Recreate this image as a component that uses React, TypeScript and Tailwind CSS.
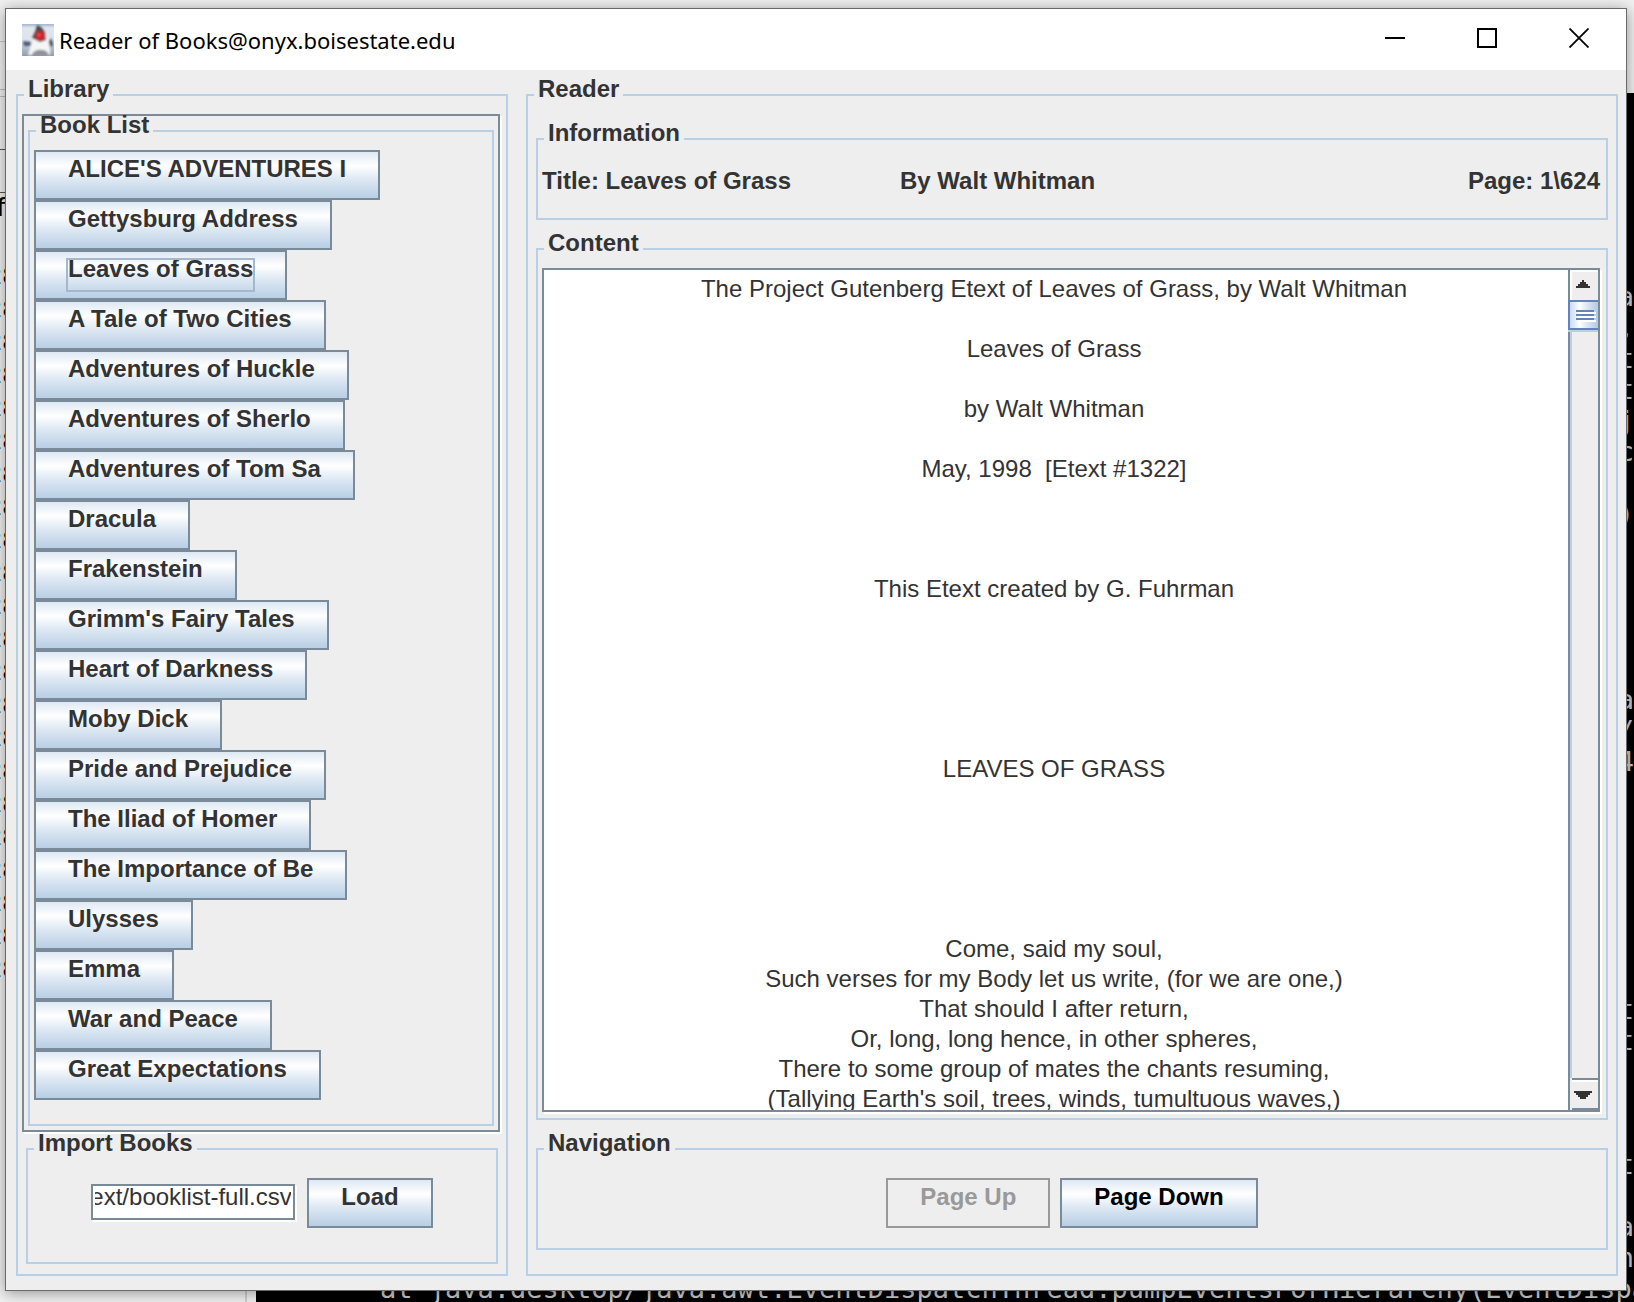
import { useEffect, useRef, type ReactNode } from "react";

const books = [
  "ALICE'S ADVENTURES I",
  "Gettysburg Address",
  "Leaves of Grass",
  "A Tale of Two Cities",
  "Adventures of Huckle",
  "Adventures of Sherlo",
  "Adventures of Tom Sa",
  "Dracula",
  "Frakenstein",
  "Grimm's Fairy Tales",
  "Heart of Darkness",
  "Moby Dick",
  "Pride and Prejudice",
  "The Iliad of Homer",
  "The Importance of Be",
  "Ulysses",
  "Emma",
  "War and Peace",
  "Great Expectations",
];

const page = `The Project Gutenberg Etext of Leaves of Grass, by Walt Whitman

Leaves of Grass

by Walt Whitman

May, 1998  [Etext #1322]



This Etext created by G. Fuhrman





LEAVES OF GRASS





Come, said my soul,
Such verses for my Body let us write, (for we are one,)
That should I after return,
Or, long, long hence, in other spheres,
There to some group of mates the chants resuming,
(Tallying Earth's soil, trees, winds, tumultuous waves,)
`;

const terminalTail: Record<number, string> = {
  0: "a", 1: ",", 2: "t", 3: "t", 4: "j", 5: "c", 7: ")", 13: "a", 14: "/", 15: "4",
  23: "t", 24: "t", 28: "t", 30: "a", 31: "n",
};

function Group({ title, className = "", children }: { title: string; className?: string; children: ReactNode }) {
  return (
    <fieldset className={`min-w-0 border-2 border-[#b8cfe5] ${className}`}>
      <legend className="ml-[6px] px-1 pb-3 leading-[18px] font-bold">{title}</legend>
      {children}
    </fieldset>
  );
}

function MetalButton({
  children,
  className = "text-[#333333]",
  focused = false,
  disabled = false,
  onClick,
}: {
  children: ReactNode;
  className?: string;
  focused?: boolean;
  disabled?: boolean;
  onClick?: () => void;
}) {
  const look = disabled
    ? "border-[#999999] text-[#999999]"
    : `border-[#7a8a99] bg-[linear-gradient(to_bottom,#dde8f3_0%,#ffffff_30%,#dde8f3_60%,#b8cfe5_100%)] ${className}`;
  return (
    <button
      type="button"
      disabled={disabled}
      onClick={onClick}
      className={`relative h-[50px] shrink-0 border-2 px-8 pt-[2px] pb-[14px] leading-[30px] font-bold whitespace-nowrap ${look}`}
    >
      {children}
      {focused && <span className="absolute inset-x-[30px] top-[6px] bottom-[6px] border-2 border-[#a3b8cc]" />}
    </button>
  );
}

function DukeIcon() {
  return (
    <svg width="32" height="32" viewBox="0 0 32 32" aria-hidden="true">
      <defs>
        <linearGradient id="sky" x1="0" y1="0" x2="0" y2="1">
          <stop offset="0" stopColor="#a3b5cf" />
          <stop offset="0.12" stopColor="#dfe6ef" />
          <stop offset="0.5" stopColor="#dfe4eb" />
          <stop offset="0.75" stopColor="#b4bfcd" />
          <stop offset="1" stopColor="#8e9cae" />
        </linearGradient>
        <filter id="soft">
          <feGaussianBlur stdDeviation="0.8" />
        </filter>
      </defs>
      <rect width="32" height="32" fill="url(#sky)" />
      <g filter="url(#soft)">
        <path d="M1 17 L9 18 L12 22 L2 22 Z" fill="#4d5c75" />
        <path d="M26 19 L29 14 L31 20 L29 24 Z" fill="#3f4858" />
        <path d="M12 10 Q9 20 6 31 L28 31 Q29 21 24 11 Z" fill="#f4f5f6" />
        <path d="M10 30 Q14 25 20 26 Q25 26 27 31 L10 32 Z" fill="#8f9399" />
        <path d="M15 1 Q20 2 23 9 L24 16 L18 18 L10 14 Q14 7 15 1 Z" fill="#4b4648" />
        <circle cx="18" cy="12" r="4.8" fill="#d0202a" />
        <circle cx="17" cy="11" r="1.5" fill="#ee5a55" />
      </g>
    </svg>
  );
}

function Backdrop() {
  return (
    <div aria-hidden="true" className="absolute inset-0 overflow-hidden bg-[#f1f1f1]">
      <div className="absolute top-[41px] left-0 h-px w-2 bg-[#c4c4c4]" />
      <div className="absolute top-[89px] left-0 h-2 w-2 border-y border-[#bdbdbd]" />
      <div className="absolute top-[149px] left-0 h-[44px] w-2 border-y border-[#555555]" />
      <div className="absolute top-[193px] left-0 w-1 font-['Liberation_Mono'] text-[26px] leading-[33px] text-black">
        <div className="flex justify-center">f</div>
        <div className="mt-[35px] flex flex-col items-center">
          {Array.from({ length: 22 }, (_, i) => (
            <div key={i}>28</div>
          ))}
        </div>
      </div>
      <div className="absolute bottom-0 left-0 h-3 w-[247px] border-r-2 border-[#cfcfcf]" />
      <div className="absolute top-[93px] right-0 bottom-0 left-[256px] overflow-hidden bg-black font-['DejaVu_Sans_Mono'] text-[27px] leading-[31px] text-[#cccccc]">
        <div className="flex flex-col items-end pt-[188px]">
          {Array.from({ length: 32 }, (_, i) => (
            <div key={i} className="h-[31px] whitespace-pre">
              {terminalTail[i] ?? " "}
            </div>
          ))}
          <div className="h-[31px] w-full pl-[124px] whitespace-nowrap">
            at java.desktop/java.awt.EventDispatchThread.pumpEventsForHierarchy(EventDispa
          </div>
        </div>
      </div>
    </div>
  );
}

function TitleBar() {
  return (
    <header className="flex h-[61px] shrink-0 items-center bg-white pr-px pl-4">
      <DukeIcon />
      <h1 className="ml-[5px] flex-1 font-['Noto_Sans'] text-[22px] leading-[30px] whitespace-nowrap text-black">
        Reader of Books@onyx.boisestate.edu
      </h1>
      <button type="button" aria-label="Minimize" className="flex h-full w-[92px] items-center justify-center pb-[3px]">
        <svg width="20" height="20" viewBox="0 0 20 20" stroke="#000" strokeWidth="2">
          <path d="M0 10H20" />
        </svg>
      </button>
      <button type="button" aria-label="Maximize" className="flex h-full w-[92px] items-center justify-center pb-[3px]">
        <svg width="20" height="20" viewBox="0 0 20 20" fill="none" stroke="#000" strokeWidth="2">
          <rect x="1" y="1" width="18" height="18" />
        </svg>
      </button>
      <button type="button" aria-label="Close" className="flex h-full w-[92px] items-center justify-center pb-[3px]">
        <svg width="20" height="20" viewBox="0 0 20 20" stroke="#000" strokeWidth="1.8">
          <path d="M0.5 0.5L19.5 19.5M19.5 0.5L0.5 19.5" />
        </svg>
      </button>
    </header>
  );
}

function ScrollBar({ onScroll }: { onScroll: (delta: number) => void }) {
  return (
    <div className="flex w-[30px] shrink-0 flex-col border-l-2 border-[#7a8a99] bg-[#eeeeee]">
      <button
        type="button"
        aria-label="Scroll up"
        onClick={() => onScroll(-30)}
        className="flex h-[30px] shrink-0 items-center justify-center border-t-2 border-l-2 border-white pr-1 pb-1"
      >
        <svg width="14" height="8" viewBox="0 0 14 8" shapeRendering="crispEdges" fill="#333">
          <path d="M6 0H8V2H10V4H12V6H14V8H0V6H2V4H4V2H6Z" />
        </svg>
      </button>
      <div className="flex-1 border-l-2 border-[#b8cfe5]">
        <div className="-ml-1 h-8 border-b-2 border-[#b8cfe5]">
          <div className="flex h-[30px] flex-col gap-[2px] border-y-2 border-l-2 border-[#6382bf] bg-[linear-gradient(to_right,#c8dcf0_0%,#ffffff_35%,#dde8f3_60%,#b0cbe6_100%)] pt-2 pl-[6px]">
            <div className="h-[2px] w-[18px] bg-[#6382bf] shadow-[2px_2px_0_#ffffff]" />
            <div className="h-[2px] w-[18px] bg-[#6382bf] shadow-[2px_2px_0_#ffffff]" />
            <div className="h-[2px] w-[18px] bg-[#6382bf] shadow-[2px_2px_0_#ffffff]" />
          </div>
        </div>
      </div>
      <button
        type="button"
        aria-label="Scroll down"
        onClick={() => onScroll(30)}
        className="ml-[2px] h-8 shrink-0 border-y-2 border-[#7a8a99]"
      >
        <span className="flex h-full items-center justify-center border-t-2 border-white pr-1">
          <svg width="18" height="8" viewBox="0 0 18 8" shapeRendering="crispEdges" fill="#333">
            <path d="M0 0H18V2H16V4H14V6H12V8H6V6H4V4H2V2H0Z" />
          </svg>
        </span>
      </button>
    </div>
  );
}

export default function App() {
  const fileRef = useRef<HTMLInputElement>(null);
  const pageRef = useRef<HTMLDivElement>(null);

  useEffect(() => {
    const field = fileRef.current;
    if (field) field.scrollLeft = field.scrollWidth;
  }, []);

  const scroll = (delta: number) => pageRef.current?.scrollBy({ top: delta });

  return (
    <div className="relative flex h-screen pt-2 pr-[7px] pb-[11px] pl-[5px] font-['Liberation_Sans',Arial,sans-serif] text-2xl text-[#333333]">
      <Backdrop />
      <div className="relative flex min-w-0 flex-1 flex-col border border-[#6a6a6a] bg-[#eeeeee] shadow-[0_2px_14px_rgba(0,0,0,0.4)]">
        <TitleBar />
        <main className="grid min-h-0 flex-1 grid-cols-[492px_minmax(0,1fr)] gap-[18px] pt-[10px] pr-2 pb-[14px] pl-[10px]">
          <Group title="Library" className="flex min-h-0 flex-col">
            <div className="mt-1 mr-[6px] mb-[2px] ml-1 flex min-h-0 flex-1 flex-col border-2 border-[#7a8a99] px-1 pb-1 shadow-[2px_2px_0_#ffffff]">
              <Group title="Book List" className="min-h-0 flex-1">
                <div className="flex flex-col items-start pt-1 pl-1">
                  {books.map((book) => (
                    <MetalButton key={book} focused={book === "Leaves of Grass"}>
                      {book}
                    </MetalButton>
                  ))}
                </div>
              </Group>
            </div>
            <Group title="Import Books" className="mx-2 mb-[10px] shrink-0">
              <div className="flex items-center justify-center gap-3 pt-[14px] pb-[34px]">
                <input
                  ref={fileRef}
                  aria-label="Book list file"
                  defaultValue="etext/booklist-full.csv"
                  className="mb-[2px] h-9 w-[204px] border-2 border-[#7a8a99] bg-white px-[2px] pb-[10px] leading-6 shadow-[2px_2px_0_#ffffff] outline-none"
                />
                <MetalButton>Load</MetalButton>
              </div>
            </Group>
          </Group>

          <Group title="Reader" className="flex min-h-0 flex-col">
            <div className="flex min-h-0 flex-1 flex-col gap-[14px] px-2 pt-[14px] pb-6">
              <Group title="Information" className="shrink-0">
                <div className="grid grid-cols-3 gap-4 pt-3 pr-[6px] pb-[22px] pl-1 leading-[30px] font-bold whitespace-nowrap">
                  <span>Title: Leaves of Grass</span>
                  <span>By Walt Whitman</span>
                  <span className="text-right">Page: 1\624</span>
                </div>
              </Group>
              <Group title="Content" className="flex min-h-0 flex-1 flex-col">
                <div className="mt-1 mr-[6px] mb-[6px] ml-1 flex min-h-0 flex-1 border-2 border-[#7a8a99] bg-white shadow-[2px_2px_0_#ffffff]">
                  <div
                    ref={pageRef}
                    className="min-w-0 flex-1 overflow-y-auto pt-1 pr-1 text-center leading-[30px] whitespace-pre-wrap [scrollbar-width:none]"
                  >
                    {page}
                  </div>
                  <ScrollBar onScroll={scroll} />
                </div>
              </Group>
              <Group title="Navigation" className="shrink-0">
                <div className="flex justify-center gap-[10px] pt-[14px] pb-5">
                  <MetalButton disabled>Page Up</MetalButton>
                  <MetalButton className="text-black">Page Down</MetalButton>
                </div>
              </Group>
            </div>
          </Group>
        </main>
      </div>
    </div>
  );
}
